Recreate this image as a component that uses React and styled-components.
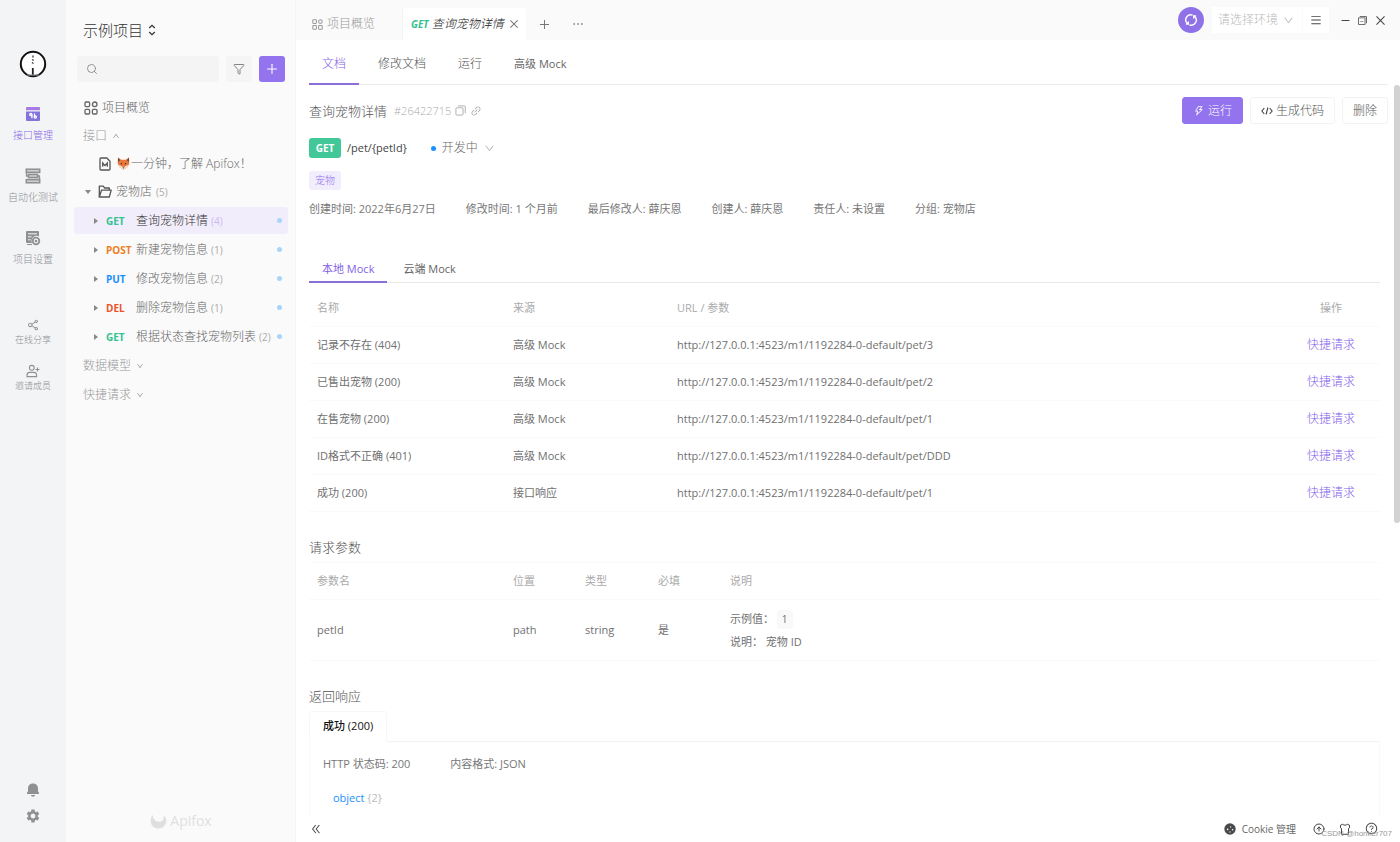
import React, { useState } from 'react'
import styled, { createGlobalStyle } from 'styled-components'
import { CircleArrowUp, Filter, Search } from 'lucide-react'
import { MdSettings } from 'react-icons/md'
import {
  AiOutlinePlus,
  AiOutlineClose,
  AiOutlineEllipsis,
  AiOutlineMenu,
  AiOutlineMinus,
  AiOutlineSwitcher,
  AiOutlineThunderbolt,
  AiOutlineDown,
  AiOutlineUp,
  AiOutlineShareAlt,
  AiOutlineLink,
  AiOutlineDoubleLeft,
  AiOutlineQuestionCircle,
} from 'react-icons/ai'

const METHOD_COLORS = {
  GET: '#34c191',
  POST: '#ef7d22',
  PUT: '#1890ff',
  DEL: '#e8542c',
}

const apis = [
  { method: 'GET', name: '查询宠物详情', count: 4 },
  { method: 'POST', name: '新建宠物信息', count: 1 },
  { method: 'PUT', name: '修改宠物信息', count: 2 },
  { method: 'DEL', name: '删除宠物信息', count: 1 },
  { method: 'GET', name: '根据状态查找宠物列表', count: 2 },
]

const mocks = [
  { name: '记录不存在 (404)', from: '高级 Mock', path: '3' },
  { name: '已售出宠物 (200)', from: '高级 Mock', path: '2' },
  { name: '在售宠物 (200)', from: '高级 Mock', path: '1' },
  { name: 'ID格式不正确 (401)', from: '高级 Mock', path: 'DDD' },
  { name: '成功 (200)', from: '接口响应', path: '1' },
]

const meta = [
  '创建时间: 2022年6月27日',
  '修改时间: 1 个月前',
  '最后修改人: 薛庆恩',
  '创建人: 薛庆恩',
  '责任人: 未设置',
  '分组: 宠物店',
]

const docTabs = ['文档', '修改文档', '运行', '高级 Mock']
const mockTabs = ['本地 Mock', '云端 Mock']

const GridIcon = ({ size = 14 }) => (
  <svg width={size} height={size} viewBox='0 0 14 14' fill='none' stroke='currentColor' strokeWidth='1.3'>
    <rect x='1' y='1' width='4.6' height='4.6' rx='1' />
    <circle cx='10.7' cy='3.3' r='2.3' />
    <rect x='1' y='8.4' width='4.6' height='4.6' rx='1' />
    <rect x='8.4' y='8.4' width='4.6' height='4.6' rx='1' />
  </svg>
)

const AvatarLogo = () => (
  <svg width='28' height='28' viewBox='0 0 28 28'>
    <circle cx='14' cy='14' r='12.2' fill='#fff' stroke='#111' strokeWidth='2' />
    <path d='M14 5.5v2M13.2 9.5l1.4 1M13 12.5l1.5 1' stroke='#333' strokeWidth='1.3' />
    <path d='M13.8 18v8' stroke='#222' strokeWidth='1.8' />
    <path d='M8 25h12' stroke='#999' strokeWidth='1' />
  </svg>
)

const ApiIcon = () => (
  <svg width='16' height='16' viewBox='0 0 16 16'>
    <path d='M2 1h12a1 1 0 0 1 1 1v2.2H1V2a1 1 0 0 1 1-1z' fill='#a77be6' />
    <path d='M1 5.4h14V14a1 1 0 0 1-1 1H2a1 1 0 0 1-1-1z' fill='#8374dc' />
    <g fill='none' stroke='#fff' strokeWidth='1.3'>
      <circle cx='5.8' cy='8.4' r='1.1' />
      <path d='M6.9 8.4v3.8M9.5 7.4v3.4' />
      <circle cx='10.3' cy='11.1' r='1.1' />
    </g>
  </svg>
)

const TestIcon = () => (
  <svg width='16' height='16' viewBox='0 0 16 16' fill='none' stroke='#8e9092' strokeWidth='1.5'>
    <rect x='1.3' y='1.2' width='13.4' height='3.2' fill='#c9cbcd' />
    <rect x='3.6' y='6.4' width='9' height='3.2' fill='#c9cbcd' />
    <rect x='1.3' y='11.6' width='13.4' height='3.2' fill='#c9cbcd' />
    <path d='M1.6 4v4h2M14.4 12V8h-2' />
  </svg>
)

const ProjectIcon = () => (
  <svg width='16' height='16' viewBox='0 0 16 16'>
    <path d='M2 1h11a1 1 0 0 1 1 1v4.6a5 5 0 0 0-7 6.4H2a1 1 0 0 1-1-1V2a1 1 0 0 1 1-1z' fill='#8e9092' />
    <path d='M3 3.8h9M3 6.8h3.5M3 9.8h2.5' stroke='#f3f4f6' strokeWidth='1' />
    <circle cx='11' cy='11' r='3.3' fill='#f3f4f6' stroke='#8e9092' strokeWidth='1.8' />
    <circle cx='11' cy='11' r='1.3' fill='#8e9092' />
    <path d='M2 14.5h5' stroke='#8e9092' />
  </svg>
)

const InviteIcon = () => (
  <svg width='14' height='14' viewBox='0 0 14 14' fill='none' stroke='#8e9092' strokeWidth='1.1'>
    <circle cx='5.8' cy='3.8' r='2.4' />
    <path d='M1 12.6v-1.4a2.8 2.8 0 0 1 2.8-2.8h4a2.8 2.8 0 0 1 2.8 2.8v1.4zM11.5 3.5v4M9.5 5.5h4' />
  </svg>
)

const BellIcon = () => (
  <svg width='14' height='14' viewBox='0 0 14 14' fill='#8e9092'>
    <path d='M7 0.5c3.2 0 5 2.2 5 5v2.7l1 1.6v1.2H1V9.8l1-1.6V5.5c0-2.8 1.8-5 5-5z' />
    <path d='M5 12h4c0 1-.8 1.7-2 1.7S5 13 5 12z' />
  </svg>
)

const DocIcon = () => (
  <svg width='12' height='14' viewBox='0 0 12 14' fill='none' stroke='#555' strokeWidth='1.3'>
    <path d='M2 1h5.8L11 4.2V12a1 1 0 0 1-1 1H2a1 1 0 0 1-1-1V2a1 1 0 0 1 1-1z' />
    <path d='M3.7 9.8V6l2.3 2.6L8.3 6v3.8' />
  </svg>
)

const FoxIcon = () => (
  <svg width='13' height='13' viewBox='0 0 13 13' role='img' aria-label='🦊'>
    <path d='M1 0.5l3.2 2.3h4.6L12 0.5l.3 6-1.6 3.5L6.5 12.7 2.3 10 .7 6.500z' fill='#e8793a' />
    <path d='M1 0.5l2.2 2.7L1 5zM12 .5L9.8 3.2 12 5z' fill='#6b4a3a' />
    <path d='M.7 8l3.3.8 2.5 2L9 8.800l3.300-.8-1.600 2-4.200 2.700L2.300 10z' fill='#f6e3d3' />
    <circle cx='4.4' cy='6.7' r='.7' fill='#3b2a24' />
    <circle cx='8.6' cy='6.7' r='.7' fill='#3b2a24' />
    <path d='M5.6 10.6h1.8l-.9 1.2z' fill='#3b2a24' />
  </svg>
)

const FolderIcon = () => (
  <svg width='14' height='13' viewBox='0 0 14 13' fill='none' stroke='#555' strokeWidth='1.3' strokeLinejoin='round'>
    <path d='M1.3 12V1.2h3.9l1.5 1.8h4.6v2' />
    <path d='M1.3 12L3.5 5.2h9.7L11.3 12z' />
  </svg>
)

const SortIcon = () => (
  <svg width='8' height='12' viewBox='0 0 8 12' fill='none' stroke='#333' strokeWidth='1.3'>
    <path d='M1.2 4L4 1.3 6.8 4M1.2 8L4 10.7 6.8 8' />
  </svg>
)

const SyncIcon = () => (
  <svg width='14' height='14' viewBox='0 0 14 14' fill='none' stroke='#fff' strokeWidth='1.4'>
    <path d='M8.6 2.2A5 5 0 0 0 3.700 10.800M5.400 11.800A5 5 0 0 0 10.300 3.200' />
    <path d='M4.300 8.400v2.600H1.900M9.700 5.600V3h2.400' />
  </svg>
)

const CopyIcon = () => (
  <svg width='11' height='11' viewBox='0 0 12 12' fill='none' stroke='#aaa'>
    <rect x='1' y='3' width='7.8' height='8' rx='1' />
    <path d='M3.2 1h7a1 1 0 0 1 1 1v7' />
  </svg>
)

const CodeIcon = () => (
  <svg width='12' height='10' viewBox='0 0 12 10' fill='none' stroke='#444' strokeWidth='1.1'>
    <path d='M3.3 2L.9 5l2.4 3M8.7 2l2.4 3-2.4 3M6.9 1.5L5.1 8.5' />
  </svg>
)

const ApifoxMark = () => (
  <svg width='17' height='16' viewBox='0 0 17 16' fill='#dfdfe0'>
    <path d='M2.5 1.8C3 6 5.2 8.8 9 8.8s5.3-3 4.6-6.6c2 1.6 2.8 3.6 2.7 5.8-.1 4-3.4 7.500-7.800 7.500S.8 12.400.7 8.200c0-2.400.5-4.600 1.800-6.400z' />
  </svg>
)

const CookieIcon = () => (
  <svg width='12' height='12' viewBox='0 0 12 12'>
    <circle cx='6' cy='6' r='5.7' fill='#4a4a4a' />
    <g fill='#fff'>
      <circle cx='3.6' cy='6.4' r='.8' />
      <circle cx='6.6' cy='3.9' r='.6' />
      <circle cx='8.6' cy='6.8' r='.8' />
      <circle cx='6' cy='8.9' r='.6' />
    </g>
  </svg>
)

const ShirtIcon = () => (
  <svg width='12' height='12' viewBox='0 0 12 12' fill='none' stroke='#444' strokeLinejoin='round'>
    <path d='M3.8 1.2c.6 1.3 3.8 1.3 4.4 0l2.3 1v2.6l-1 .7v5.8h-7V5.5l-1-.7V2.2z' />
  </svg>
)

const App = () => {
  const [selected, setSelected] = useState(0)
  const [docTab, setDocTab] = useState(0)
  const [mockTab, setMockTab] = useState(0)

  return (
    <>
      <GlobalStyle />
      <Shell>
        <Rail>
          <RailLogo>
            <AvatarLogo />
          </RailLogo>
          <RailItem $active>
            <ApiIcon />
            接口管理
          </RailItem>
          <RailItem>
            <TestIcon />
            自动化测试
          </RailItem>
          <RailItem>
            <ProjectIcon />
            项目设置
          </RailItem>
          <RailExtra>
            <RailSmall>
              <AiOutlineShareAlt size={14} />
              在线分享
            </RailSmall>
            <RailSmall>
              <InviteIcon />
              邀请成员
            </RailSmall>
          </RailExtra>
          <RailBottom>
            <IconButton aria-label='通知'>
              <BellIcon />
            </IconButton>
            <IconButton aria-label='设置'>
              <MdSettings size={16} color='#8e9092' />
            </IconButton>
          </RailBottom>
        </Rail>

        <Sidebar>
          <ProjectTitle>
            示例项目 <SortIcon />
          </ProjectTitle>
          <SearchRow>
            <SearchBox>
              <Search size={12} strokeWidth={1.8} />
              <input type='text' aria-label='搜索' />
            </SearchBox>
            <SquareButton aria-label='筛选'>
              <Filter size={12} strokeWidth={1.8} />
            </SquareButton>
            <SquareButton $primary aria-label='新建'>
              <AiOutlinePlus size={14} />
            </SquareButton>
          </SearchRow>
          <Tree $gap={1}>
            <TreeRow $indent={10} $gap={4}>
              <GridIcon />
              项目概览
            </TreeRow>
            <TreeRow $indent={9} $gap={5} $muted>
              接口
              <AiOutlineUp size={8} />
            </TreeRow>
            <TreeRow $indent={25} $gap={6}>
              <DocIcon />
              <FoxLabel>
                <FoxIcon />
                一分钟，了解 Apifox！
              </FoxLabel>
            </TreeRow>
            <TreeRow $indent={10} $gap={4}>
              <Caret $open />
              <FolderIcon />
              <span>宠物店</span>
              <Count>(5)</Count>
            </TreeRow>
          </Tree>
          <Tree $gap={2}>
            {apis.map((api, index) => (
              <TreeRow
                key={api.name}
                $indent={20}
                $gap={3}
                $selected={index === selected}
                onClick={() => setSelected(index)}
              >
                <Caret />
                <Method $color={METHOD_COLORS[api.method]}>{api.method}</Method>
                <span>{api.name}</span>
                <Count $selected={index === selected}>({api.count})</Count>
                <StatusDot />
              </TreeRow>
            ))}
            <TreeRow $indent={9} $gap={5} $muted>
              数据模型
              <AiOutlineDown size={8} />
            </TreeRow>
            <TreeRow $indent={9} $gap={5} $muted>
              快捷请求
              <AiOutlineDown size={8} />
            </TreeRow>
          </Tree>
          <Brand>
            <ApifoxMark />
            Apifox
          </Brand>
        </Sidebar>

        <Main>
          <TopBar>
            <OverviewTab>
              <GridIcon size={11} />
              项目概览
            </OverviewTab>
            <ActiveTab>
              <b>GET</b>
              <i>查询宠物详情</i>
              <AiOutlineClose size={12} color='#777' />
            </ActiveTab>
            <TabTools>
              <IconButton aria-label='新标签'>
                <AiOutlinePlus size={13} color='#777' />
              </IconButton>
              <IconButton aria-label='更多'>
                <AiOutlineEllipsis size={14} />
              </IconButton>
            </TabTools>
            <SyncButton aria-label='同步'>
              <SyncIcon />
            </SyncButton>
            <EnvGroup>
              <EnvSelect>
                <select aria-label='环境'>
                  <option>请选择环境</option>
                </select>
                <AiOutlineDown size={11} />
              </EnvSelect>
              <IconButton aria-label='环境管理'>
                <AiOutlineMenu size={12} />
              </IconButton>
            </EnvGroup>
            <WindowTools>
              <IconButton aria-label='最小化'>
                <AiOutlineMinus size={11} />
              </IconButton>
              <IconButton aria-label='还原'>
                <AiOutlineSwitcher size={11} />
              </IconButton>
              <IconButton aria-label='关闭'>
                <AiOutlineClose size={13} />
              </IconButton>
            </WindowTools>
          </TopBar>

          <DocTabs>
            {docTabs.map((name, index) => (
              <LineTab
                key={name}
                $active={index === docTab}
                $mixed={name.includes('Mock')}
                onClick={() => setDocTab(index)}
              >
                {name}
              </LineTab>
            ))}
          </DocTabs>

          <Scroll>
            <TitleRow>
              <Title>查询宠物详情</Title>
              <ApiId>#26422715</ApiId>
              <CopyIcon />
              <AiOutlineLink size={12} color='#aaa' />
              <Actions>
                <Button $primary>
                  <AiOutlineThunderbolt size={12} />
                  运行
                </Button>
                <Button>
                  <CodeIcon />
                  生成代码
                </Button>
                <Button>删除</Button>
              </Actions>
            </TitleRow>

            <PathRow>
              <MethodBadge>GET</MethodBadge>
              <Path>/pet/{'{petId}'}</Path>
              <State>
                <DevDot />
                开发中
                <AiOutlineDown size={11} color='#bbb' />
              </State>
            </PathRow>
            <Tag>宠物</Tag>
            <Meta>
              {meta.map((text) => (
                <span key={text}>{text}</span>
              ))}
            </Meta>

            <Body>
              <MockTabs>
                {mockTabs.map((name, index) => (
                  <LineTab
                    key={name}
                    $active={index === mockTab}
                    $mixed
                    onClick={() => setMockTab(index)}
                  >
                    {name}
                  </LineTab>
                ))}
              </MockTabs>
              <MockTable>
                <colgroup>
                  <col width='196' />
                  <col width='164' />
                  <col />
                  <col width='98' />
                </colgroup>
                <thead>
                  <tr>
                    <th>名称</th>
                    <th>来源</th>
                    <th>URL / 参数</th>
                    <th>操作</th>
                  </tr>
                </thead>
                <tbody>
                  {mocks.map((mock) => (
                    <tr key={mock.name}>
                      <td>{mock.name}</td>
                      <td>{mock.from}</td>
                      <td>http://127.0.0.1:4523/m1/1192284-0-default/pet/{mock.path}</td>
                      <td>
                        <QuickLink href='#'>快捷请求</QuickLink>
                      </td>
                    </tr>
                  ))}
                </tbody>
              </MockTable>

              <SectionTitle>请求参数</SectionTitle>
              <ParamTable>
                <colgroup>
                  <col width='196' />
                  <col width='72' />
                  <col width='73' />
                  <col width='72' />
                  <col />
                </colgroup>
                <thead>
                  <tr>
                    <th>参数名</th>
                    <th>位置</th>
                    <th>类型</th>
                    <th>必填</th>
                    <th>说明</th>
                  </tr>
                </thead>
                <tbody>
                  <tr>
                    <td>petId</td>
                    <td>path</td>
                    <td>string</td>
                    <td>是</td>
                    <td>
                      <Line>
                        示例值： <Example>1</Example>
                      </Line>
                      <Line>说明： 宠物 ID</Line>
                    </td>
                  </tr>
                </tbody>
              </ParamTable>

              <SectionTitle>返回响应</SectionTitle>
              <ResponseTabs>
                <ResponseTab>成功 (200)</ResponseTab>
              </ResponseTabs>
              <ResponsePanel>
                <ResponseInfo>
                  <span>HTTP 状态码: 200</span>
                  <span>内容格式: JSON</span>
                </ResponseInfo>
                <Schema>
                  object <small>{'{2}'}</small>
                </Schema>
              </ResponsePanel>
            </Body>
            <ScrollThumb />
          </Scroll>

          <Footer>
            <IconButton aria-label='收起'>
              <AiOutlineDoubleLeft size={12} />
            </IconButton>
            <CookieButton>
              <CookieIcon />
              Cookie 管理
            </CookieButton>
            <IconButton aria-label='更新'>
              <CircleArrowUp size={12} strokeWidth={2} />
            </IconButton>
            <IconButton aria-label='主题'>
              <ShirtIcon />
            </IconButton>
            <IconButton aria-label='帮助'>
              <AiOutlineQuestionCircle size={13} />
            </IconButton>
          </Footer>
        </Main>
        <Watermark>CSDN @honker707</Watermark>
      </Shell>
    </>
  )
}

export default App

const GlobalStyle = createGlobalStyle`
  * {
    box-sizing: border-box;
  }
  body {
    margin: 0;
    color: #666;
    background: #fff;
    font-family: 'Open Sans', 'Noto Sans CJK SC', sans-serif;
    font-size: 12px;
    font-weight: 300;
    line-height: 16px;
  }
  button, input, select {
    margin: 0;
    padding: 0;
    border: 0;
    background: none;
    color: inherit;
    font: inherit;
  }
  button {
    cursor: pointer;
  }
  svg {
    flex: none;
  }
`

const Shell = styled.div`
  position: relative;
  display: grid;
  grid-template-columns: 66px 230px minmax(0, 1fr);
  height: 100vh;
  overflow: hidden;
`

const IconButton = styled.button`
  display: flex;
  align-items: center;
  justify-content: center;
  color: #444;
`

/* left rail */
const Rail = styled.nav`
  display: flex;
  flex-direction: column;
  align-items: center;
  background: #f3f4f6;
`

const RailLogo = styled.div`
  display: flex;
  margin: 50px 0 28px;
`

const RailItem = styled.button`
  display: flex;
  flex-direction: column;
  align-items: center;
  gap: 5px;
  height: 62px;
  font-size: 10px;
  color: ${(props) => (props.$active ? '#8b6be8' : '#8e9092')};
`

const RailExtra = styled.div`
  display: flex;
  flex-direction: column;
  align-items: center;
  gap: 16px;
  margin-top: 26px;
`

const RailSmall = styled.button`
  display: flex;
  flex-direction: column;
  align-items: center;
  height: 30px;
  font-size: 9px;
  color: #8e9092;
`

const RailBottom = styled.div`
  display: flex;
  flex-direction: column;
  align-items: center;
  gap: 11px;
  margin: auto 0 18px;
`

/* sidebar */
const Sidebar = styled.aside`
  display: flex;
  flex-direction: column;
  padding: 20px 7px 11px 8px;
  background: #fafafa;
  border-right: 1px solid #f5f5f5;
`

const ProjectTitle = styled.h1`
  display: flex;
  align-items: center;
  gap: 5px;
  margin: 0 9px 16px;
  font-size: 15px;
  line-height: 20px;
  font-weight: 300;
  color: #333;
`

const SearchRow = styled.div`
  display: flex;
  gap: 7px;
  margin: 0 3px 12px;
`

const SearchBox = styled.label`
  display: flex;
  flex: 1;
  align-items: center;
  gap: 6px;
  min-width: 0;
  padding: 0 9px;
  border-radius: 4px;
  background: #f4f4f4;
  color: #888;

  input {
    flex: 1;
    min-width: 0;
    outline: none;
  }
`

const SquareButton = styled.button`
  display: flex;
  align-items: center;
  justify-content: center;
  width: 26px;
  height: 26px;
  border-radius: 3px;
  background: ${(props) => (props.$primary ? '#9373ee' : '#f5f5f5')};
  color: ${(props) => (props.$primary ? '#fff' : '#777')};
`

const Tree = styled.div`
  display: flex;
  flex-direction: column;
  gap: ${(props) => props.$gap}px;
  margin-bottom: 2px;
`

const TreeRow = styled.button`
  display: flex;
  align-items: center;
  gap: ${(props) => props.$gap}px;
  height: 27px;
  padding: 0 6px 0 ${(props) => props.$indent}px;
  border-radius: 3px;
  white-space: nowrap;
  background: ${(props) => (props.$selected ? '#f1edfa' : 'none')};
  color: ${(props) => (props.$selected ? '#333' : props.$muted ? '#999' : '#666')};
`

const FoxLabel = styled.span`
  display: flex;
  align-items: center;
  gap: 1px;
`

const Caret = styled.span`
  border: 3px solid transparent;
  ${(props) =>
    props.$open
      ? 'border-top: 4px solid #888; border-bottom-width: 0; margin: 0 3px 0 1px;'
      : 'border-left: 4px solid #888; border-right-width: 0;'}
`

const Method = styled.span`
  width: 27px;
  margin-left: 5px;
  text-align: left;
  font-size: 10px;
  font-weight: 700;
  color: ${(props) => props.$color};
`

const Count = styled.span`
  font-size: 10px;
  font-weight: 400;
  color: ${(props) => (props.$selected ? '#c9b8f5' : '#aaa')};
`

const StatusDot = styled.span`
  width: 5px;
  height: 5px;
  margin-left: auto;
  border-radius: 50%;
  background: #a8d4fb;
`

const Brand = styled.div`
  display: flex;
  align-items: center;
  justify-content: center;
  gap: 3px;
  margin-top: auto;
  font-size: 14px;
  line-height: 20px;
  font-weight: 400;
  color: #dfdfe0;
`

/* main area */
const Main = styled.main`
  display: flex;
  flex-direction: column;
  min-width: 0;
  min-height: 0;
`

const TopBar = styled.header`
  display: flex;
  align-items: center;
  flex: none;
  height: 40px;
  padding-right: 13px;
  background: #fafafa;
`

const OverviewTab = styled.button`
  display: flex;
  align-items: center;
  align-self: flex-end;
  gap: 4px;
  width: 107px;
  height: 32px;
  padding-left: 16px;
  border-right: 1px solid #f3f3f3;
  color: #999;
`

const ActiveTab = styled.div`
  display: flex;
  align-items: center;
  align-self: flex-end;
  gap: 3px;
  height: 32px;
  padding: 0 6px 0 8px;
  border-radius: 3px 3px 0 0;
  background: #fff;
  color: #222;
  white-space: nowrap;

  b {
    font-size: 10px;
    font-style: italic;
    font-weight: 700;
    color: #34c191;
  }
  i {
    margin-right: 1px;
  }
`

const TabTools = styled.div`
  display: flex;
  align-items: center;
  align-self: flex-end;
  gap: 20px;
  height: 32px;
  margin: 0 auto 0 12px;
`

const SyncButton = styled.button`
  display: flex;
  align-items: center;
  justify-content: center;
  width: 26px;
  height: 26px;
  margin-right: 8px;
  border-radius: 50%;
  background: #8f72e8;
  color: #fff;
`

const EnvGroup = styled.div`
  display: flex;
  height: 26px;

  button {
    width: 26px;
    background: #fff;
  }
`

const EnvSelect = styled.div`
  display: flex;
  align-items: center;
  width: 90px;
  margin-right: 1px;
  padding: 0 8px 0 6px;
  background: #fff;
  color: #bbb;

  select {
    flex: 1;
    min-width: 0;
    appearance: none;
    outline: none;
  }
`

const WindowTools = styled.div`
  display: flex;
  gap: 6px;
  margin-left: 11px;
`

const DocTabs = styled.div`
  display: flex;
  flex: none;
  gap: 6px;
  height: 45px;
  margin: 0 12px 0 13px;
  border-bottom: 1px solid #ebebeb;
`

const LineTab = styled.button`
  margin-bottom: -1px;
  padding: 4px 13px 0;
  border-bottom: 2px solid ${(props) => (props.$active ? '#8b6fd8' : 'transparent')};
  font-size: ${(props) => (props.$mixed ? '11px' : '12px')};
  font-weight: ${(props) => (props.$mixed ? 400 : 300)};
  color: ${(props) => (props.$active ? '#8461e8' : props.$mixed ? '#666' : '#555')};
`

const Scroll = styled.div`
  position: relative;
  flex: 1;
  min-height: 0;
  padding: 12px 12px 0 13px;
  overflow: hidden;
`

const ScrollThumb = styled.div`
  position: absolute;
  top: 0;
  right: 0;
  width: 6px;
  height: 60%;
  border-radius: 3px;
  background: #d2d2d2;
`

const TitleRow = styled.div`
  display: flex;
  align-items: center;
  gap: 4px;
`

const Title = styled.h2`
  margin: 0 3px 0 0;
  font-size: 13px;
  line-height: 20px;
  font-weight: 300;
  color: #555;
`

const ApiId = styled.span`
  font-size: 11px;
  color: #aaa;
`

const Actions = styled.div`
  display: flex;
  gap: 7px;
  margin-left: auto;
`

const Button = styled.button`
  display: flex;
  align-items: center;
  gap: 3px;
  height: 27px;
  padding: 0 10px;
  border: 1px solid ${(props) => (props.$primary ? '#9373ee' : '#f3f3f3')};
  border-radius: 3px;
  background: ${(props) => (props.$primary ? '#9373ee' : '#fff')};
  color: ${(props) => (props.$primary ? '#fff' : '#555')};
`

const PathRow = styled.div`
  display: flex;
  align-items: center;
  margin-top: 14px;
`

const MethodBadge = styled.span`
  width: 32px;
  border-radius: 3px;
  background: #42c798;
  color: #fff;
  font-size: 10px;
  line-height: 20px;
  font-weight: 700;
  text-align: center;
`

const Path = styled.span`
  margin: 0 24px 0 6px;
  font-size: 11px;
  font-weight: 400;
  color: #444;
`

const State = styled.button`
  display: flex;
  align-items: center;
  gap: 6px;
`

const DevDot = styled.span`
  width: 5px;
  height: 5px;
  border-radius: 50%;
  background: #1890ff;
`

const Tag = styled.span`
  display: block;
  width: fit-content;
  margin-top: 13px;
  padding: 0 6px;
  border-radius: 3px;
  background: #f1edfd;
  color: #9373ee;
  font-size: 10px;
  line-height: 19px;
`

const Meta = styled.div`
  display: flex;
  flex-wrap: wrap;
  gap: 8px 30px;
  margin-top: 11px;
  font-size: 11px;
  font-weight: 400;
  color: #777;
`

const Body = styled.div`
  margin: 35px 8px 0 0;
`

const MockTabs = styled.div`
  display: flex;
  gap: 3px;
  height: 31px;
  border-bottom: 1px solid #e8e8e8;
`

const Table = styled.table`
  width: 100%;
  table-layout: fixed;
  border-collapse: collapse;
  font-size: 11px;

  th,
  td {
    height: 37px;
    padding: 1px 8px 0;
    border-bottom: 1px solid #fafafa;
    text-align: left;
    font-weight: 400;
    color: #707070;
  }
  th {
    color: #aaa;
  }
`

const MockTable = styled(Table)`
  margin-top: 6px;

  th:last-child,
  td:last-child {
    text-align: center;
  }
`

const ParamTable = styled(Table)`
  border-top: 1px solid #fafafa;

  td {
    height: 61px;
  }
`

const QuickLink = styled.a`
  color: #8461e8;
  font-size: 12px;
  font-weight: 300;
  text-decoration: none;
`

const SectionTitle = styled.h3`
  margin: 25px 0 5px;
  font-size: 13px;
  line-height: 20px;
  font-weight: 300;
  color: #555;
`

const Line = styled.div`
  line-height: 23px;
`

const Example = styled.code`
  display: inline-block;
  padding: 0 5px;
  border-radius: 3px;
  background: #f9f9f9;
  font-family: inherit;
  font-size: 10px;
  line-height: 19px;
`

const ResponseTabs = styled.div`
  display: flex;
  height: 31px;
  border-bottom: 1px solid #f3f3f3;
`

const ResponseTab = styled.button`
  margin-bottom: -1px;
  padding: 0 13px;
  border: 1px solid #f7f7f7;
  border-bottom-color: #fff;
  border-radius: 3px 3px 0 0;
  background: #fff;
  color: #111;
  font-size: 11px;
  font-weight: 500;
`

const ResponsePanel = styled.div`
  min-height: 120px;
  padding: 14px 13px;
  border: 1px solid #f9f9f9;
  border-top: 0;
  font-size: 11px;
  font-weight: 400;
  color: #777;
`

const ResponseInfo = styled.div`
  display: flex;
  gap: 40px;
`

const Schema = styled.div`
  margin: 18px 0 0 10px;
  color: #1890ff;

  small {
    font-size: 11px;
    color: #bbb;
  }
`

const Footer = styled.footer`
  display: flex;
  align-items: center;
  flex: none;
  gap: 14px;
  height: 27px;
  padding: 0 22px 0 14px;
`

const CookieButton = styled.button`
  display: flex;
  align-items: center;
  gap: 6px;
  margin: 0 3px 0 auto;
  font-size: 10px;
  font-weight: 400;
`

const Watermark = styled.span`
  position: absolute;
  right: 8px;
  bottom: 0;
  font-family: 'Liberation Sans', sans-serif;
  font-size: 8px;
  font-weight: 400;
  color: #999;
`
